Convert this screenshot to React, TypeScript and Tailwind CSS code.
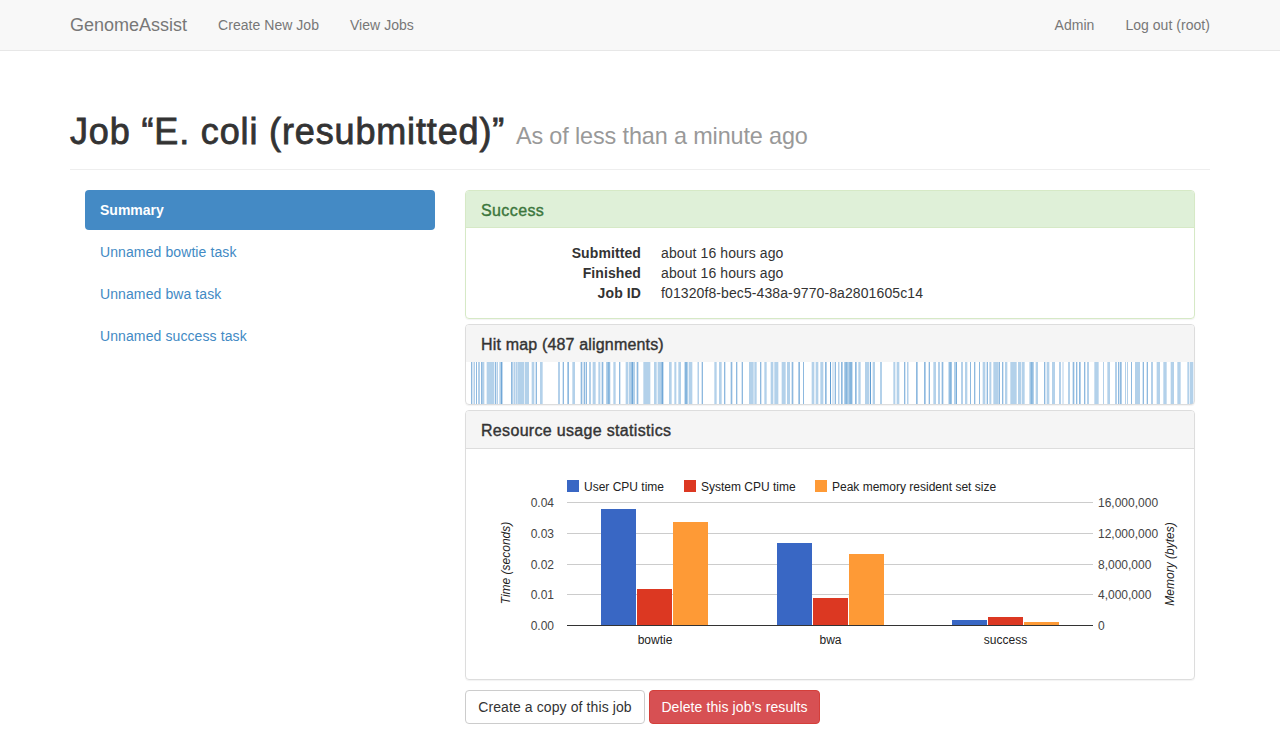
const chartFont = '"Liberation Sans", Arial, sans-serif';

// hit map bars, read off the screenshot: [start, end] in 1/3 px from the panel's left edge
const hitsLeft = [
  [18, 22], [26, 29], [33, 36], [40, 44], [48, 52], [52, 58], [65, 88], [90, 93], [95, 98], [103, 112], [108, 112],
  [138, 143], [146, 149], [152, 155], [157, 178], [180, 192], [200, 208], [212, 216], [225, 233], [280, 284],
  [293, 297], [307, 312], [322, 330], [347, 352], [356, 360], [362, 366], [372, 378], [383, 392], [400, 406],
  [410, 415], [423, 436], [428, 434], [445, 452], [462, 466], [482, 490], [492, 510], [500, 504], [515, 520],
  [535, 556], [567, 575], [578, 596], [590, 594], [612, 620], [628, 634], [640, 648], [658, 670], [660, 666],
  [672, 682], [698, 701], [710, 714], [748, 755], [762, 770], [777, 781], [797, 802], [813, 817], [830, 834],
  [852, 866], [868, 875], [885, 889], [898, 905], [917, 925], [928, 940], [950, 962], [966, 975], [980, 985],
  [1000, 1005], [1014, 1017], [1040, 1048], [1052, 1060], [1066, 1075], [1080, 1085], [1095, 1098],
];

// same thing for the right half of the bar, from x=830
const hitsRight = [
  [0, 3], [8, 10], [14, 18], [25, 28], [33, 38], [42, 68], [46, 52], [58, 66], [75, 80], [85, 92], [105, 118],
  [120, 123], [120, 123], [128, 135], [150, 156], [190, 196], [200, 208], [222, 226], [232, 235], [258, 263],
  [282, 287], [296, 300], [310, 318], [325, 329], [335, 340], [355, 366], [358, 364], [372, 380], [378, 381],
  [394, 398], [405, 412], [420, 423], [432, 436], [447, 450], [458, 466], [470, 474], [478, 484], [490, 505],
  [506, 510], [516, 520], [525, 532], [541, 560], [564, 574], [576, 584], [598, 612], [602, 608], [617, 624],
  [642, 646], [650, 658], [666, 675], [688, 692], [698, 700], [714, 720], [728, 733], [738, 742], [747, 752],
  [762, 766], [772, 776], [793, 806], [820, 822], [832, 840], [856, 860], [864, 868], [870, 875], [885, 887],
  [892, 894], [903, 906], [915, 930], [938, 942], [950, 954], [964, 968], [980, 990], [1000, 1010], [1022, 1032],
  [1042, 1052], [1072, 1078], [1080, 1090],
];

const gridLines = [
  { y: 502.5, left: '0.04', right: '16,000,000' },
  { y: 533.5, left: '0.03', right: '12,000,000' },
  { y: 564.5, left: '0.02', right: '8,000,000' },
  { y: 594.5, left: '0.01', right: '4,000,000' },
  { y: 625.5, left: '0.00', right: '0' },
];

const groups = [
  { label: 'bowtie', x: 601, labelX: 655, tops: [509, 589, 522] },
  { label: 'bwa', x: 777, labelX: 830.5, tops: [543, 598, 554] },
  { label: 'success', x: 952, labelX: 1005.5, tops: [620, 617, 622] },
];

const series = ['#3967c4', '#dc3822', '#fe9a36'];

const legend = [
  { x: 567, color: '#3967c4', label: 'User CPU time' },
  { x: 684, color: '#dc3822', label: 'System CPU time' },
  { x: 815, color: '#fe9a36', label: 'Peak memory resident set size' },
];

// thin hits read darker than the wide pale bands
const hitOpacity = (a: number, b: number) => (b - a <= 5 ? 0.6 : 0.4);

function HitMap() {
  return (
    <svg width={728} height={42} className="block">
      {hitsLeft.map(([a, b], i) => (
        <rect key={i} x={a / 3 - 1} y={0} width={(b - a) / 3} height={42} fill="#428bca" fillOpacity={hitOpacity(a, b)} />
      ))}
      {hitsRight.map(([a, b], i) => (
        <rect key={i} x={364 + a / 3} y={0} width={(b - a) / 3} height={42} fill="#428bca" fillOpacity={hitOpacity(a, b)} />
      ))}
    </svg>
  );
}

function UsageChart() {
  return (
    <svg width={728} height={230} className="block tracking-normal" style={{ fontFamily: chartFont }}>
      {/* drawn in page coordinates, shifted to the panel body */}
      <g transform="translate(-466 -449)" fontSize={12}>
        {legend.map((item) => (
          <g key={item.label}>
            <rect x={item.x} y={480} width={12} height={12} fill={item.color} />
            <text x={item.x + 17} y={491} fill="#222">{item.label}</text>
          </g>
        ))}
        {gridLines.map((line) => (
          <g key={line.y}>
            <line x1={567} x2={1093} y1={line.y} y2={line.y} stroke={line.y === 625.5 ? '#333' : '#ccc'} />
            <text x={554} y={line.y + 4} textAnchor="end" fill="#444">{line.left}</text>
            <text x={1098} y={line.y + 4} fill="#444">{line.right}</text>
          </g>
        ))}
        {groups.map((group) => (
          <g key={group.label}>
            {group.tops.map((top, i) => (
              <rect key={i} x={group.x + i * 36} y={top} width={35} height={625 - top} fill={series[i]} />
            ))}
            <text x={group.labelX} y={644} textAnchor="middle" fill="#222">{group.label}</text>
          </g>
        ))}
        <text transform="translate(510 563) rotate(-90)" textAnchor="middle" fontStyle="italic" fill="#222">Time (seconds)</text>
        <text transform="translate(1174 564) rotate(-90)" textAnchor="middle" fontStyle="italic" fill="#222">Memory (bytes)</text>
      </g>
    </svg>
  );
}

const jobInfo = [
  { label: 'Submitted', value: 'about 16 hours ago' },
  { label: 'Finished', value: 'about 16 hours ago' },
  { label: 'Job ID', value: 'f01320f8-bec5-438a-9770-8a2801605c14' },
];

const sideLinks = ['Unnamed bowtie task', 'Unnamed bwa task', 'Unnamed success task'];

export default function App() {
  return (
    <div className="text-[14px] leading-[20px] tracking-[0.1px] text-[#333] bg-white font-['Liberation_Sans',Arial,sans-serif]">
      <nav className="h-[51px] bg-[#f8f8f8] border-b border-[#e7e7e7] px-[70px] flex items-center justify-between text-[#777] tracking-[0.04px]">
        <div className="flex items-center">
          <span className="text-[18px] tracking-normal mr-[31px]">GenomeAssist</span>
          <a className="mr-[31px]">Create New Job</a>
          <a>View Jobs</a>
        </div>
        <div className="flex items-center gap-[31px]">
          <a>Admin</a>
          <a>Log out (root)</a>
        </div>
      </nav>

      <div className="px-[70px]">
        <div className="pt-[61px] pb-[17px] border-b border-[#eee] mb-[20px] box-content h-[40px]">
          <h1 className="text-[36px] leading-[40px] font-medium tracking-[0.85px] [-webkit-text-stroke:0.8px_#333]">
            Job “E. coli (resubmitted)”{' '}
            <small className="text-[23.4px] text-[#999] font-normal tracking-[-0.12px] [-webkit-text-stroke:0]">As of less than a minute ago</small>
          </h1>
        </div>

        <div className="px-[15px] flex gap-[30px]">
          <div className="w-[350px] flex flex-col gap-[2px]">
            <a className="h-[40px] px-[15px] flex items-center rounded-[4px] bg-[#448ac5] text-white font-bold tracking-normal">Summary</a>
            {sideLinks.map((link) => (
              <a key={link} className="h-[40px] px-[15px] flex items-center text-[#428ac4]">{link}</a>
            ))}
          </div>

          <div className="w-[730px] flex flex-col gap-[5px]">
            <section className="rounded-[4px] border border-[#d6e9c6] shadow-[0_1px_1px_rgba(0,0,0,0.05)]">
              <h3 className="h-[37px] pt-[3px] px-[15px] flex items-center bg-[#dff0d8] text-[#3c763d] text-[16px] tracking-[0.4px] border-b border-[#d6e9c6] rounded-t-[3px] [-webkit-text-stroke:0.4px_#3c763d]">Success</h3>
              <dl className="pt-[15px] pb-[15px] px-[15px] grid grid-cols-[160px_1fr] gap-x-[20px]">
                {jobInfo.map((row) => (
                  <div key={row.label} className="contents">
                    <dt className="text-right font-bold">{row.label}</dt>
                    <dd>{row.value}</dd>
                  </div>
                ))}
              </dl>
            </section>

            <section className="rounded-[4px] border border-[#ddd] shadow-[0_1px_1px_rgba(0,0,0,0.05)] overflow-hidden">
              <h3 className="h-[37px] pt-[2px] px-[15px] flex items-center bg-[#f5f5f5] text-[16px] tracking-[0.17px] [-webkit-text-stroke:0.4px_#333]">Hit map (487 alignments)</h3>
              <HitMap />
            </section>

            <section className="rounded-[4px] border border-[#ddd] shadow-[0_1px_1px_rgba(0,0,0,0.05)] overflow-hidden">
              <h3 className="h-[38px] pt-[2px] px-[15px] flex items-center bg-[#f5f5f5] border-b border-[#ddd] text-[16px] tracking-[0.32px] [-webkit-text-stroke:0.4px_#333]">Resource usage statistics</h3>
              <UsageChart />
            </section>

            <div className="flex gap-[4px] mt-[5px]">
              <button className="h-[34px] w-[180px] rounded-[4px] border border-[#ccc] bg-white text-[#333]">Create a copy of this job</button>
              <button className="h-[34px] w-[171px] rounded-[4px] border border-[#d43f3a] bg-[#d75053] text-white">Delete this job’s results</button>
            </div>
          </div>
        </div>
      </div>
    </div>
  );
}
